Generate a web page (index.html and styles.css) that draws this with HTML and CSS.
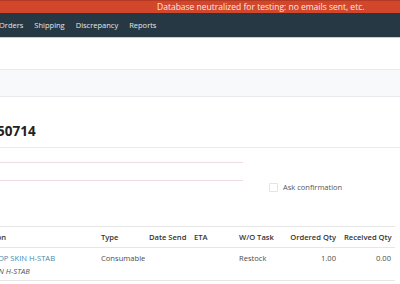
FILE: index.html
```html
<!DOCTYPE html>
<html lang="en">
<head>
  <meta charset="UTF-8">
  <title>Purchase Order</title>
  <link rel="stylesheet" href="styles.css">
</head>
<body>
  <div class="banner">Database neutralized for testing: no emails sent, etc.</div>

  <header class="navbar">
    <nav class="menu">
      <a href="#">Orders</a>
      <a href="#">Shipping</a>
      <a href="#">Discrepancy</a>
      <a href="#">Reports</a>
    </nav>
  </header>

  <div class="control-panel"></div>
  <div class="status-bar"></div>

  <main class="sheet">
    <h1 class="title">50714</h1>

    <div class="group">
      <div class="fields">
        <div class="field field-first"></div>
        <div class="field field-second"></div>
      </div>
      <div class="options">
        <label class="check">
          <span class="box"></span>
          <span>Ask confirmation</span>
        </label>
      </div>
    </div>

    <table class="lines">
      <thead>
        <tr>
          <th class="col-desc">Description</th>
          <th class="col-type">Type</th>
          <th class="col-date">Date Send</th>
          <th class="col-eta">ETA</th>
          <th class="col-task">W/O Task</th>
          <th class="col-qty num">Ordered Qty</th>
          <th class="col-qty num">Received Qty</th>
        </tr>
      </thead>
      <tbody>
        <tr>
          <td>
            <a href="#" class="product">[HS071] TOP SKIN H-STAB</a>
            <div class="note">COVER SKIN H-STAB</div>
          </td>
          <td>Consumable</td>
          <td></td>
          <td></td>
          <td>Restock</td>
          <td class="num">1.00</td>
          <td class="num">0.00</td>
        </tr>
      </tbody>
    </table>
  </main>
</body>
</html>
```

FILE: styles.css
```css
body {
  margin: 0;
  padding: 0;
  overflow: hidden;
  width: 400px;
  height: 284px;
  background-color: #ffffff;
  font-family: "Open Sans", "Noto Sans", sans-serif;
  font-size: 8.5px;
  color: #4c4c4c;
}

a {
  text-decoration: none;
}

/* Neutralized database ribbon */
.banner {
  height: 12px;
  line-height: 12px;
  padding-left: 157px;
  background-color: #d2472c;
  border-top: 1px solid #b53a24;
  color: #fbe9e4;
  white-space: nowrap;
}

.navbar {
  height: 24px;
  background-color: #263843;
  border-bottom: 1px solid #c9cdd1;
}

.menu {
  display: flex;
  align-items: center;
  gap: 11px;
  height: 100%;
  margin-left: -1px;
  font-size: 7.5px;
}

.menu a {
  color: #e3e6e8;
}

.control-panel {
  height: 31px;
}

.status-bar {
  height: 26px;
  background-color: #f8f9fa;
  border-top: 1px solid #e7e9ec;
  border-bottom: 1px solid #e7e9ec;
}

.title {
  margin: 26px 0 0 -3px;
  height: 24px;
  line-height: 16px;
  font-size: 13.5px;
  font-weight: 700;
  color: #222222;
  border-bottom: 1px solid #f1e6ea;
}

.group {
  display: flex;
  gap: 26px;
  height: 78px;
}

.fields {
  width: 243px;
}

.field {
  height: 14px;
  border-bottom: 1px solid #f0dce2;
}

.field-second {
  margin-top: 3px;
}

.options {
  padding-top: 34px;
}

.check {
  display: flex;
  align-items: center;
  gap: 5px;
  font-size: 7.5px;
  color: #555555;
}

.box {
  width: 7px;
  height: 7px;
  border: 1px solid #e2e5e8;
  border-radius: 1px;
}

/* Order lines */
.lines {
  margin-left: -40px;
  border-collapse: collapse;
  table-layout: fixed;
  width: 435px;
  font-size: 7.6px;
  border-top: 1px solid #e6e6e6;
  border-bottom: 1px solid #e6e6e6;
}

.lines th,
.lines td {
  box-sizing: border-box;
  padding: 0 4px;
  text-align: left;
  white-space: nowrap;
  overflow: hidden;
}

.lines th {
  height: 21px;
  font-weight: 600;
  color: #333333;
  border-bottom: 1px solid #e6e6e6;
}

.lines td {
  vertical-align: top;
  padding-top: 5px;
  height: 33px;
}

.lines .num {
  text-align: right;
}

.col-desc { width: 137px; }
.col-type { width: 48px; }
.col-date { width: 45px; }
.col-eta { width: 45px; }
.col-task { width: 50px; }
.col-qty { width: 55px; }

.product {
  color: #4a88ad;
}

.note {
  margin-top: 3px;
  font-style: italic;
  color: #555555;
}
```
